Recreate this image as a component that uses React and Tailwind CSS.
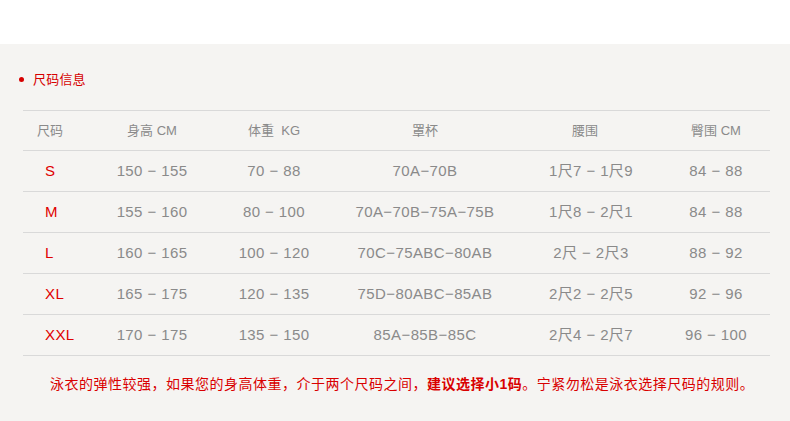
import React from "react";

const rows = [
  ["S", "150 − 155", "70 − 88", "70A−70B", "1尺7 − 1尺9", "84 − 88"],
  ["M", "155 − 160", "80 − 100", "70A−70B−75A−75B", "1尺8 − 2尺1", "84 − 88"],
  ["L", "160 − 165", "100 − 120", "70C−75ABC−80AB", "2尺 − 2尺3", "88 − 92"],
  ["XL", "165 − 175", "120 − 135", "75D−80ABC−85AB", "2尺2 − 2尺5", "92 − 96"],
  ["XXL", "170 − 175", "135 − 150", "85A−85B−85C", "2尺4 − 2尺7", "96 − 100"],
];

const font = { fontFamily: '"Liberation Sans", "Noto Sans CJK SC", sans-serif' };
const grid = "grid grid-cols-[69px_120px_124px_178px_154px_96px_1fr] items-center border-b border-[#d9d9d9]";

export default function App() {
  return (
    <div className="w-[790px] h-[421px] bg-white overflow-hidden" style={font}>
      <div className="h-[44px] bg-white" />
      <div className="h-[377px] bg-[#f5f4f2] pt-[26px]">
        <div className="flex items-center h-[18px] pl-[19px]">
          <span className="w-[5px] h-[5px] rounded-full bg-[#d60000]" />
          <span className="ml-[9px] text-[13px] leading-none tracking-[0.2px] text-[#d60000]">尺码信息</span>
        </div>
        <div className="ml-[23px] mr-[20px] mt-[22px] border-t border-[#d9d9d9]">
          <div className={`${grid} h-[40px] text-[13px] text-[#8a8a8a]`}>
            <div className="pl-[14px]">尺码</div>
            <div className="text-center">身高 CM</div>
            <div className="text-center">体重&nbsp; KG</div>
            <div className="text-center">罩杯</div>
            <div className="text-center pr-[12px]">腰围</div>
            <div className="text-center">臀围 CM</div>
            <div />
          </div>
          {rows.map((r) => (
            <div key={r[0]} className={`${grid} h-[41px] text-[15px] tracking-[0.4px] text-[#8a8a8a]`}>
              <div className="pl-[22px] text-[#e00000]">{r[0]}</div>
              <div className="text-center">{r[1]}</div>
              <div className="text-center">{r[2]}</div>
              <div className="text-center">{r[3]}</div>
              <div className="text-center">{r[4]}</div>
              <div className="text-center">{r[5]}</div>
              <div />
            </div>
          ))}
        </div>
        <div className="mt-[19px] pl-[50px] text-[14px] leading-[18px] tracking-[0.5px] text-[#d90000] whitespace-nowrap">
          泳衣的弹性较强，如果您的身高体重，介于两个尺码之间，<b className="font-bold">建议选择小1码</b>。宁紧勿松是泳衣选择尺码的规则。
        </div>
      </div>
    </div>
  );
}
